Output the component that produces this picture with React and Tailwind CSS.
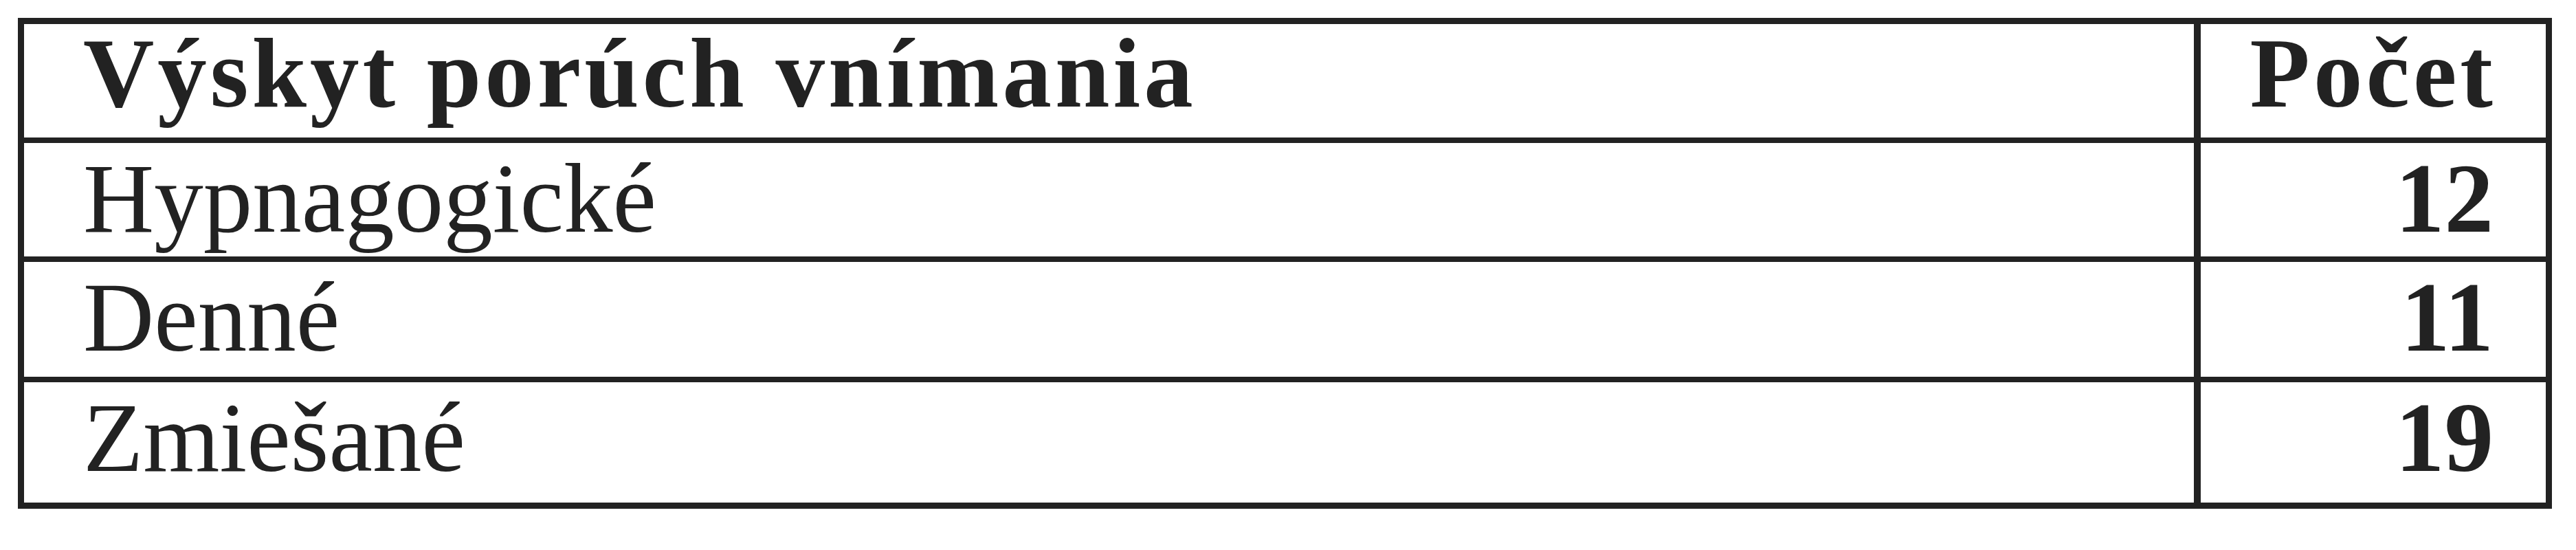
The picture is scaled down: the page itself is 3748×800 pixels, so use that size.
const rows = [
  { label: 'Hypnagogické', count: 12, h: 'h-[173px]' },
  { label: 'Denné', count: 11, h: 'h-[175px]' },
  { label: 'Zmiešané', count: 19, h: 'h-[183px]' },
];

export default function App() {
  return (
    <div className="w-[3748px] h-[800px] bg-white pt-[26px] pl-[26px] text-[#222]" style={{ fontFamily: '"Liberation Serif", "Times New Roman", serif' }}>
      <div className="w-[3687px] border-[9px] border-[#222] text-[143px] leading-[143px]">
        <div className="flex h-[165px]">
          <div className="flex-1 pl-[86px] pt-[1px] font-bold tracking-[5px]">Výskyt porúch vnímania</div>
          <div className="w-[512px] border-l-[10px] border-[#222] pr-[72px] pt-[1px] text-right font-bold tracking-[5px]">Počet</div>
        </div>
        {rows.map((r) => (
          <div key={r.label} className={`flex border-t-[8px] border-[#222] ${r.h}`}>
            <div className="flex-1 pl-[86px] pt-[10px]">{r.label}</div>
            <div className="w-[512px] border-l-[10px] border-[#222] pr-[76px] pt-[10px] text-right font-bold">{r.count}</div>
          </div>
        ))}
      </div>
    </div>
  );
}
